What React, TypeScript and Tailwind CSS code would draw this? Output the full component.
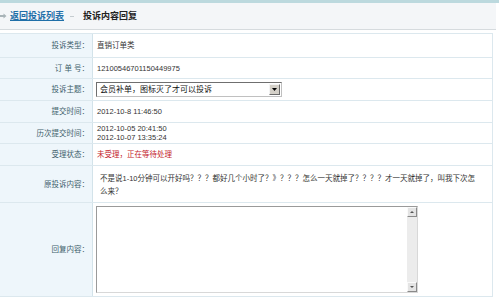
import React from "react";

const font = { fontFamily: '"Liberation Sans", "Noto Sans CJK SC", sans-serif' };

function Row({
  label,
  h,
  children,
  labelClass = "",
  valueClass = "items-center",
}: {
  label: string;
  h: string;
  children: React.ReactNode;
  labelClass?: string;
  valueClass?: string;
}) {
  return (
    <div className={`flex border-b border-[#dce8ee] ${h}`}>
      <div
        className={`w-[93px] shrink-0 bg-[#eef6fb] border-r border-[#d3e3ea] flex items-center justify-end pr-[3px] text-[7.5px] leading-[9px] text-[#3f5f6b] ${labelClass}`}
      >
        {label}
      </div>
      <div className={`flex-1 flex pl-[4px] text-[7.5px] leading-[9px] text-[#333] ${valueClass}`}>
        {children}
      </div>
    </div>
  );
}

export default function App() {
  return (
    <div className="w-[499px] h-[300px] bg-white overflow-hidden" style={font}>
      <div className="h-[3px] bg-[#bcd9de]" />
      <div className="w-[496px] h-[27px] bg-[#f4f6f8] border-b border-[#d6dbde] flex items-center">
        <svg width="7" height="6" viewBox="0 0 7 6" className="ml-[0px]">
          <path d="M0 2h3.5V0.5L6.5 3 3.5 5.5V4H0z" fill="#a9b4b8" />
        </svg>
        <a className="ml-[3px] text-[9px] leading-[10px] font-bold text-[#1f6fa8] underline" href="#">
          返回投诉列表
        </a>
        <span className="ml-[6px] w-[4px] h-[1px] bg-[#c5ccd0]" />
        <span className="ml-[9px] text-[9px] leading-[10px] font-bold text-[#222]">投诉内容回复</span>
      </div>
      <div className="mt-[3px] w-[493px] border-t border-r border-[#dce8ee]">
        <Row label="投诉类型：" h="h-[24px]">
          直销订单类
        </Row>
        <Row label="订 单 号：" h="h-[21px]">
          12100546701150449975
        </Row>
        <Row label="投诉主题：" h="h-[22px]">
          <div className="w-[186px] h-[15px] -ml-[1px] border border-t-[#6f6f6f] border-l-[#6f6f6f] border-r-[#c0c0c0] border-b-[#c0c0c0] bg-white flex items-center">
            <span className="flex-1 pl-[3px] text-[8px] leading-[10px] text-[#111] whitespace-nowrap">
              会员补单，图标灭了才可以投诉
            </span>
            <div className="w-[11px] h-[11px] mr-[1px] bg-[#d4d0c8] border border-t-[#f4f4f4] border-l-[#f4f4f4] border-r-[#6a6a6a] border-b-[#6a6a6a] flex items-center justify-center">
              <svg width="5" height="3" viewBox="0 0 5 3">
                <path d="M0 0h5L2.5 3z" fill="#000" />
              </svg>
            </div>
          </div>
        </Row>
        <Row label="提交时间：" h="h-[22px]">
          2012-10-8 11:46:50
        </Row>
        <Row label="历次提交时间：" h="h-[21px]">
          <div className="flex flex-col">
            <span>2012-10-05 20:41:50</span>
            <span>2012-10-07 13:35:24</span>
          </div>
        </Row>
        <Row label="受理状态：" h="h-[22px]">
          <span className="text-[#c4222c]">未受理，正在等待处理</span>
        </Row>
        <Row label="原投诉内容：" h="h-[37px]" valueClass="items-start">
          <div className="pl-[3px] pt-[6px] leading-[13px] whitespace-nowrap">
            不是说1-10分钟可以开好吗？？？都好几个小时了？》？？？怎么一天就掉了？？？？才一天就掉了，叫我下次怎
            <br />
            么来？
          </div>
        </Row>
        <Row label="回复内容：" h="h-[94px]">
          <div className="w-[322px] h-[87px] -ml-[1px] border border-t-[#9a9a9a] border-l-[#9a9a9a] border-r-[#d8d8d8] border-b-[#d8d8d8] bg-white flex">
            <textarea className="flex-1 resize-none outline-none bg-white text-[8px]" />
            <div className="w-[10px] h-full bg-[#ececec] flex flex-col justify-between">
              <div className="h-[10px] bg-[#e4e4e4] border border-t-[#fafafa] border-l-[#fafafa] border-r-[#8a8a8a] border-b-[#8a8a8a] flex items-center justify-center">
                <svg width="4" height="2" viewBox="0 0 4 2">
                  <path d="M0 2h4L2 0z" fill="#555" />
                </svg>
              </div>
              <div className="h-[10px] bg-[#e4e4e4] border border-t-[#fafafa] border-l-[#fafafa] border-r-[#8a8a8a] border-b-[#8a8a8a] flex items-center justify-center">
                <svg width="4" height="2" viewBox="0 0 4 2">
                  <path d="M0 0h4L2 2z" fill="#555" />
                </svg>
              </div>
            </div>
          </div>
        </Row>
      </div>
    </div>
  );
}
